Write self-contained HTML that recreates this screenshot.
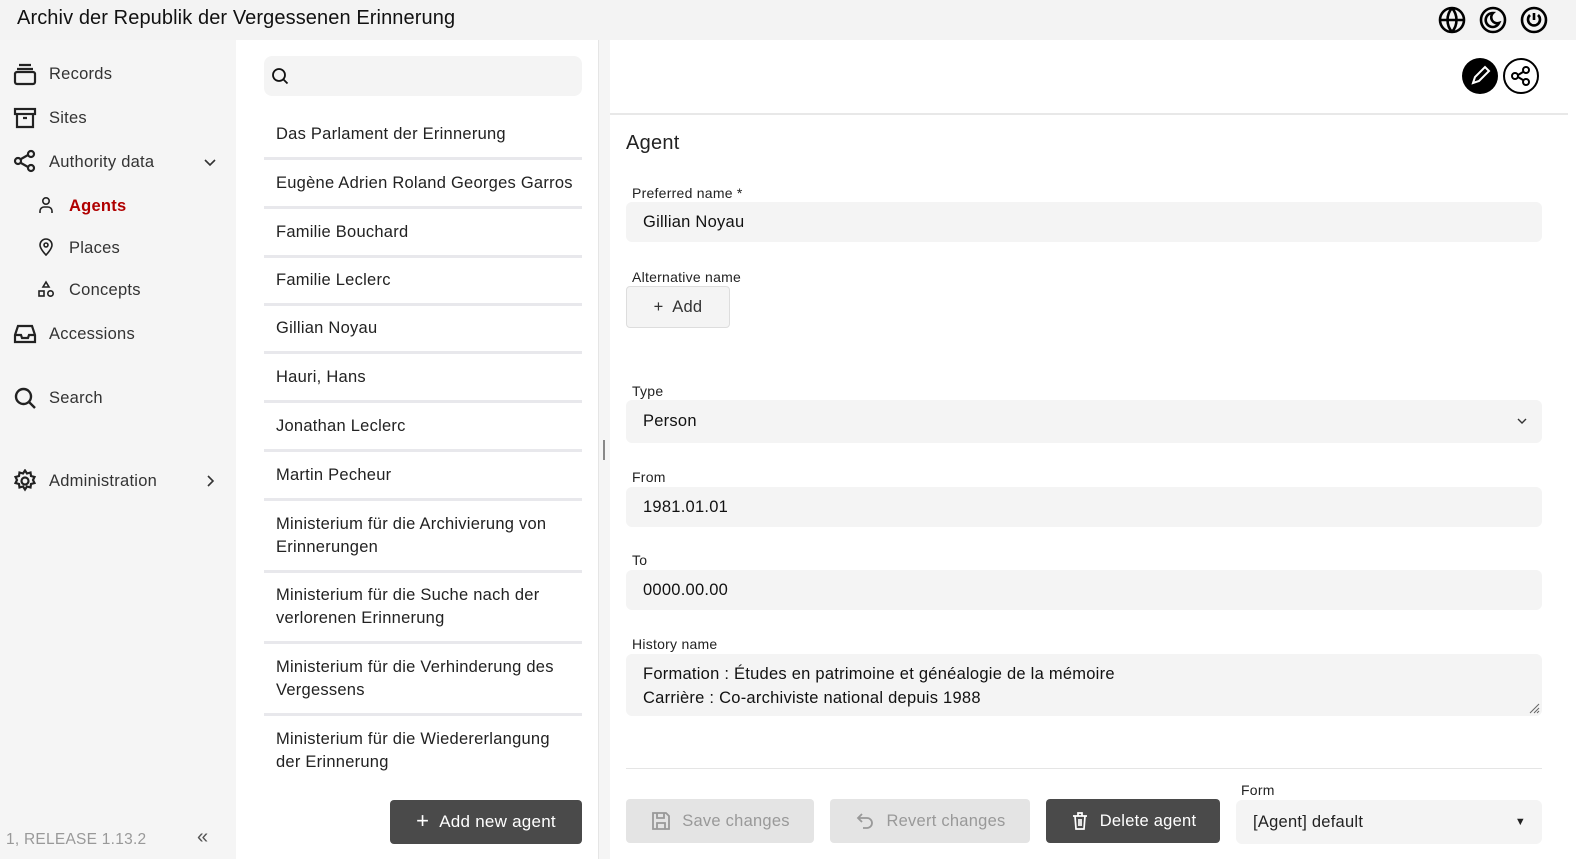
<!DOCTYPE html><html><head><meta charset="utf-8"><style>
*{box-sizing:border-box;margin:0;padding:0}
html,body{overflow:hidden}
body{width:1576px;height:859px;font-family:"Liberation Sans",sans-serif;background:#fff;color:#222;position:relative;letter-spacing:0.25px}
.top{position:absolute;left:0;top:0;width:1576px;height:40px;background:#f3f3f3}
.top h1{position:absolute;left:17px;top:7px;font-size:20px;font-weight:normal;color:#111;letter-spacing:0.1px}
.side{position:absolute;left:0;top:40px;width:236px;height:819px;background:#f5f5f5}
.ni{position:absolute;font-size:16.5px;color:#333}
.list{position:absolute;left:236px;top:40px;width:362px;height:819px;background:#fff}
.sep{position:absolute;left:598px;top:40px;width:12px;height:819px;background:#f5f5f5;border-left:1px solid #e5e5e5}
.search{position:absolute;left:264px;top:56px;width:318px;height:40px;background:#f4f4f4;border-radius:8px}
.it{position:absolute;left:264px;width:318px;border-bottom:3px solid #e8e8ec;font-size:16.5px;color:#222;padding-left:12px;line-height:23px;display:flex;align-items:center}
.lbl{position:absolute;left:632px;font-size:14px;color:#222}
.fld{position:absolute;left:626px;width:916px;height:40px;background:#f4f4f4;border-radius:6px;font-size:16.5px;padding-left:17px;line-height:40px;color:#111}
.btn{position:absolute;top:799px;height:44px;border-radius:4px;font-size:16.5px;display:flex;align-items:center;justify-content:center;gap:10px}
</style></head><body>
<div class="top"><h1>Archiv der Republik der Vergessenen Erinnerung</h1>
<svg style="position:absolute;left:1437px;top:5px" width="30" height="30" viewBox="0 0 30 30" fill="none" stroke="#000" stroke-width="2.6"><circle cx="15" cy="15" r="12"/><path d="M3 15h24M15 3c-6 7-6 17 0 24M15 3c6 7 6 17 0 24"/></svg>
<svg style="position:absolute;left:1478px;top:5px" width="30" height="30" viewBox="0 0 30 30" fill="none" stroke="#000" stroke-width="2.6"><circle cx="15" cy="15" r="12"/><path d="M15 8a7 7 0 1 0 6 10a6 6 0 0 1-6-10z"/></svg>
<svg style="position:absolute;left:1519px;top:5px" width="30" height="30" viewBox="0 0 30 30" fill="none" stroke="#000" stroke-width="2.6"><circle cx="15" cy="15" r="12"/><path d="M15 8v7M11 10a6 6 0 1 0 8 0"/></svg>
</div>
<div class="side">
<svg style="position:absolute;left:13px;top:22px" width="24" height="24" viewBox="0 0 24 24" fill="none" stroke="#222" stroke-width="2.2"><path d="M6 3h12M4 7h16"/><rect x="2" y="10" width="20" height="12" rx="2"/></svg>
<div class="ni" style="left:49px;top:25px">Records</div>
<svg style="position:absolute;left:13px;top:66px" width="24" height="24" viewBox="0 0 24 24" fill="none" stroke="#222" stroke-width="2.2"><rect x="2" y="3" width="20" height="5"/><path d="M4 8v13h16V8M10 12h4"/></svg>
<div class="ni" style="left:49px;top:69px">Sites</div>
<svg style="position:absolute;left:13px;top:109px" width="24" height="24" viewBox="0 0 24 24" fill="none" stroke="#222" stroke-width="2.2"><circle cx="5" cy="12" r="3"/><circle cx="18" cy="5" r="3"/><circle cx="18" cy="19" r="3"/><path d="M8 10l7-4M8 14l7 4"/></svg>
<div class="ni" style="left:49px;top:113px">Authority data</div>
<svg style="position:absolute;left:202px;top:114px" width="16" height="16" viewBox="0 0 16 16" fill="none" stroke="#333" stroke-width="1.6"><path d="M3 6l5 5 5-5"/></svg>
<svg style="position:absolute;left:37px;top:156px" width="18" height="18" viewBox="0 0 18 18" fill="none" stroke="#222" stroke-width="1.6"><circle cx="9" cy="5" r="3.2"/><path d="M3 17v-2a4 4 0 0 1 4-4h4a4 4 0 0 1 4 4v2"/></svg>
<div class="ni" style="left:69px;top:157px;color:#b00000;font-weight:bold">Agents</div>
<svg style="position:absolute;left:37px;top:197px" width="18" height="20" viewBox="0 0 18 20" fill="none" stroke="#222" stroke-width="1.6"><path d="M9 18s-6-6-6-10a6 6 0 0 1 12 0c0 4-6 10-6 10z"/><circle cx="9" cy="8" r="2"/></svg>
<div class="ni" style="left:69px;top:199px">Places</div>
<svg style="position:absolute;left:37px;top:240px" width="18" height="18" viewBox="0 0 18 18" fill="none" stroke="#222" stroke-width="1.6"><path d="M9 2l3 5H6z"/><rect x="2" y="11" width="5" height="5"/><circle cx="13.5" cy="13.5" r="2.7"/></svg>
<div class="ni" style="left:69px;top:241px">Concepts</div>
<svg style="position:absolute;left:13px;top:282px" width="24" height="24" viewBox="0 0 24 24" fill="none" stroke="#222" stroke-width="2.2"><path d="M2 13l3-9h14l3 9v7H2zM2 13h6l1 3h6l1-3h6"/></svg>
<div class="ni" style="left:49px;top:285px">Accessions</div>
<svg style="position:absolute;left:13px;top:346px" width="24" height="24" viewBox="0 0 24 24" fill="none" stroke="#222" stroke-width="2.4"><circle cx="10.5" cy="10.5" r="7.5"/><path d="M16 16l6 6"/></svg>
<div class="ni" style="left:49px;top:349px">Search</div>
<svg style="position:absolute;left:13px;top:429px" width="24" height="24" viewBox="0 0 24 24" fill="none" stroke="#222" stroke-width="2.2"><circle cx="12" cy="12" r="3.5"/><path d="M12 1.5l2 3 3.5-1 .5 3.5 3.5 1-1.5 3 1.5 3-3.5 1-.5 3.5-3.5-1-2 3-2-3-3.5 1-.5-3.5-3.5-1 1.5-3-1.5-3 3.5-1 .5-3.5 3.5 1z"/></svg>
<div class="ni" style="left:49px;top:432px">Administration</div>
<svg style="position:absolute;left:202px;top:433px" width="16" height="16" viewBox="0 0 16 16" fill="none" stroke="#333" stroke-width="1.6"><path d="M6 3l5 5-5 5"/></svg>
<div class="ni" style="left:6px;top:791px;color:#999;font-size:15.5px">1, RELEASE 1.13.2</div>
<div class="ni" style="left:197px;top:786px;color:#555;font-size:20px">«</div>
</div>
<div class="list"></div>
<div class="sep"><div style="position:absolute;left:4px;top:400px;width:2px;height:20px;background:#888"></div></div>
<div class="search"><svg style="position:absolute;left:7px;top:11px" width="18" height="18" viewBox="0 0 18 18" fill="none" stroke="#111" stroke-width="1.8"><circle cx="8" cy="8" r="6"/><path d="M12.5 12.5l4 4"/></svg></div>
<div class="it" style="top:112px;height:48px">Das Parlament der Erinnerung</div>
<div class="it" style="top:160px;height:49px">Eugène Adrien Roland Georges Garros</div>
<div class="it" style="top:209px;height:49px">Familie Bouchard</div>
<div class="it" style="top:258px;height:48px">Familie Leclerc</div>
<div class="it" style="top:306px;height:48px">Gillian Noyau</div>
<div class="it" style="top:354px;height:49px">Hauri, Hans</div>
<div class="it" style="top:403px;height:49px">Jonathan Leclerc</div>
<div class="it" style="top:452px;height:49px">Martin Pecheur</div>
<div class="it" style="top:501px;height:72px">Ministerium für die Archivierung von Erinnerungen</div>
<div class="it" style="top:573px;height:71px">Ministerium für die Suche nach der verlorenen Erinnerung</div>
<div class="it" style="top:644px;height:72px">Ministerium für die Verhinderung des Vergessens</div>
<div class="it" style="top:716px;height:60px;border-bottom:none;align-items:flex-start;padding-top:12px;padding-right:20px">Ministerium für die Wiedererlangung der Erinnerung</div>
<div class="btn" style="left:390px;width:192px;top:800px;background:#4a4a4a;color:#fff;font-size:17px"><span style="font-size:22px;margin-top:-3px">+</span>Add new agent</div>

<div style="position:absolute;left:1462px;top:58px;width:36px;height:36px;border-radius:50%;background:#000"><svg width="36" height="36" viewBox="0 0 36 36" fill="none" stroke="#fff" stroke-width="2"><path d="M11 25l2-6 10-10 4 4-10 10z"/></svg></div>
<div style="position:absolute;left:1503px;top:58px;width:36px;height:36px;border-radius:50%;border:2px solid #000"><svg width="32" height="32" viewBox="0 0 32 32" fill="none" stroke="#000" stroke-width="2"><circle cx="10" cy="16" r="3"/><circle cx="21" cy="10" r="3"/><circle cx="21" cy="22" r="3"/><path d="M13 15l5-3M13 17l5 3"/></svg></div>
<div style="position:absolute;left:610px;top:113px;width:958px;height:2px;background:#e8e8e8"></div>
<div style="position:absolute;left:626px;top:132px;font-size:20px;color:#222">Agent</div>
<div class="lbl" style="top:185px">Preferred name *</div>
<div class="fld" style="top:202px">Gillian Noyau</div>
<div class="lbl" style="top:269px">Alternative name</div>
<div style="position:absolute;left:626px;top:286px;width:104px;height:42px;background:#f4f4f4;border:1px solid #ddd;border-radius:4px;font-size:16.5px;line-height:40px;text-align:center;color:#333">+&nbsp; Add</div>
<div class="lbl" style="top:383px">Type</div>
<div class="fld" style="top:400px;height:43px;line-height:43px">Person<svg style="position:absolute;right:14px;top:15px" width="12" height="12" viewBox="0 0 12 12" fill="none" stroke="#333" stroke-width="1.4"><path d="M2 4l4 4 4-4"/></svg></div>
<div class="lbl" style="top:469px">From</div>
<div class="fld" style="top:487px">1981.01.01</div>
<div class="lbl" style="top:552px">To</div>
<div class="fld" style="top:570px">0000.00.00</div>
<div class="lbl" style="top:636px">History name</div>
<div class="fld" style="top:654px;height:62px;line-height:24px;padding-top:8px">Formation : Études en patrimoine et généalogie de la mémoire<br>Carrière : Co-archiviste national depuis 1988<svg style="position:absolute;right:2px;bottom:2px" width="12" height="12" viewBox="0 0 12 12" stroke="#666" stroke-width="1"><path d="M11 2L2 11M11 6L6 11M11 9L9 11"/></svg></div>
<div style="position:absolute;left:626px;top:768px;width:916px;height:1px;background:#e5e5e5"></div>
<div class="btn" style="left:626px;width:188px;background:#e4e4e4;color:#999"><svg width="22" height="22" viewBox="0 0 22 22" fill="none" stroke="#999" stroke-width="1.8"><path d="M3 3h13l3 3v13H3z"/><path d="M7 3v5h7V3M7 19v-6h8v6"/></svg>Save changes</div>
<div class="btn" style="left:830px;width:200px;background:#e4e4e4;color:#999"><svg width="22" height="22" viewBox="0 0 22 22" fill="none" stroke="#999" stroke-width="1.8"><path d="M8 4L4 8l4 4M4 8h9a5 5 0 0 1 0 10h-4"/></svg>Revert changes</div>
<div class="btn" style="left:1046px;width:174px;background:#4a4a4a;color:#fff"><svg width="20" height="20" viewBox="0 0 20 20" fill="none" stroke="#fff" stroke-width="1.7"><path d="M3 5h14M8 5V2h4v3M5 5l1 13h8l1-13M9 8v7M11 8v7"/></svg>Delete agent</div>
<div class="lbl" style="left:1241px;top:782px">Form</div>
<div style="position:absolute;left:1236px;top:800px;width:306px;height:44px;background:#f4f4f4;border-radius:6px;font-size:16.5px;line-height:44px;padding-left:17px">[Agent] default<span style="position:absolute;right:16px;font-size:11px">▼</span></div>
</body></html>
